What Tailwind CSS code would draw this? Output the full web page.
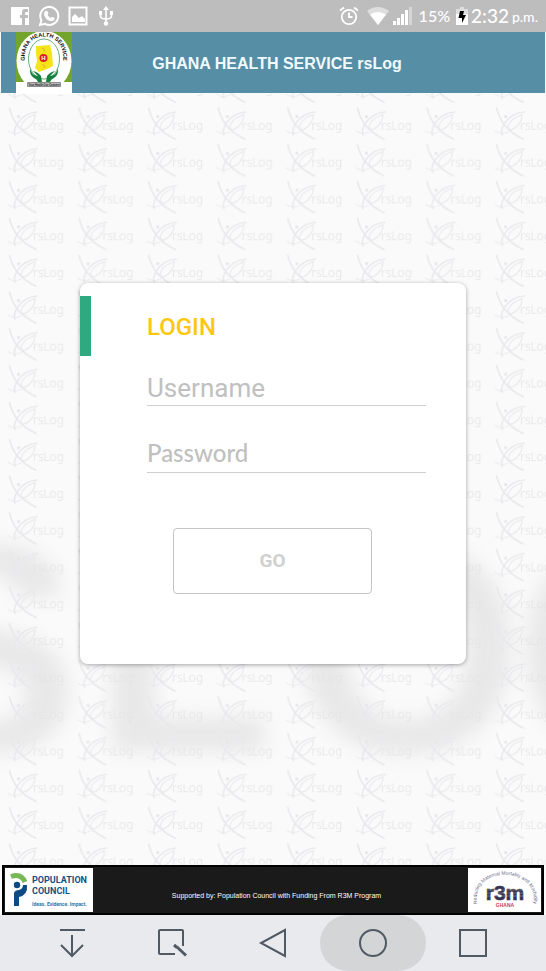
<!DOCTYPE html>
<html lang="en">
<head>
  <meta charset="UTF-8" />
  <meta name="viewport" content="width=device-width, initial-scale=1.0" />
  <title>GHANA HEALTH SERVICE rsLog</title>
  <script src="https://cdn.jsdelivr.net/npm/@tailwindcss/browser@4"></script>
</head>
<body class="min-h-screen flex flex-col bg-[#fafafa] font-['Roboto',sans-serif]">
  <!-- Status bar -->
  <div class="h-8 bg-[#bdbdbd] text-white flex items-center justify-between pl-[10px] pr-2">
    <div class="flex items-center gap-2">
      <svg class="w-5 h-5" viewBox="0 0 20 20"><path fill="currentColor" d="M1 1h18v18h-4v-7h3V9h-3V7q0-1 1-1h2V3h-3q-3 0-3 3v3h-2v3h2v7H1z"/></svg>
      <svg class="w-[22px] h-[22px]" viewBox="0 0 22 22"><path fill="none" stroke="currentColor" stroke-width="2" d="M2 20l1.400-4.800A9 9 0 1 1 7 18.800z"/><path fill="currentColor" d="M7.500 6l1.700-.3 1.300 3-1 1.400q1 1.800 3 2.800l1.500-1.200 2.700 1.400q0 3-3 3C9.500 16 6 12 6 8.700q0-1.700 1.500-2.700z"/></svg>
      <svg class="w-5 h-5" viewBox="0 0 20 20"><path fill="none" stroke="currentColor" stroke-width="2" d="M1.500 1.500h17v17h-17z"/><path fill="currentColor" d="M4 16v-5l3-3 4 4 3-2 3 3v3z"/></svg>
      <svg class="w-5 h-5" viewBox="0 0 20 20"><path fill="none" stroke="currentColor" stroke-width="1.600" d="M10 3v14M4.500 6v4q0 3 5.500 3t5.500-3V6"/><path fill="currentColor" d="M10 0l3 4H7zM3 5h3v4H3zM14 5h3v4h-3z"/><circle cx="10" cy="17.500" r="2.200" fill="currentColor"/></svg>
    </div>
    <div class="flex items-center font-['Lato',sans-serif] font-medium">
      <svg class="w-5 h-5 mr-2" viewBox="0 0 20 20" fill="none" stroke="currentColor" stroke-width="1.800"><circle cx="10" cy="11" r="7.200"/><path d="M10 6.500V11h3.500M1 4.500L5 1.500M19 4.500L15 1.500"/></svg>
      <svg class="w-[22px] h-[18px] mr-1" viewBox="0 0 22 18"><path fill="#dedede" d="M0 4Q11-4 22 4L11 18z"/><path fill="currentColor" d="M3 7.500q8-5 16 0L11 18z"/></svg>
      <svg class="w-[19px] h-[18px] mr-[7px]" viewBox="0 0 19 18"><path fill="currentColor" d="M0 14h3v4H0zM4 11h3v7H4zM8 7h3v11H8zM12 3h3v15h-3z"/><path fill="#d6d6d6" d="M16 0h3v18h-3z"/></svg>
      <span class="text-[16px] leading-8 mr-[6px]">15%</span>
      <svg class="w-3 h-[18px] mr-[3px]" viewBox="0 0 12 18"><path fill="#dedede" d="M4 0h4v2h4v6H0V2h4z"/><path fill="currentColor" d="M0 7h12v11H0z"/><path fill="#000" d="M4 4h4L7 8h3l-4 8V11H2.500z"/></svg>
      <span class="text-[19px] leading-8">2:32</span>
      <span class="text-[14px] leading-8 pt-px ml-[3px]">p.m.</span>
    </div>
  </div>

  <!-- App bar -->
  <header class="relative z-10 h-[61px] mx-px bg-[#558ea5] flex items-center justify-center px-4">
    <svg class="absolute left-[15px] top-0 w-14 h-[62px]" viewBox="0 0 56 62">
      <path fill="#fff" d="M0 0h56v62H0z"/>
      <path fill="#73a52d" d="M0 0h56v50H0z"/>
      <ellipse cx="28" cy="29" rx="27.500" ry="30" fill="#fff"/>
      <path fill="#fff" d="M0 50h56v12H0z"/>
      <ellipse cx="28" cy="27" rx="15.500" ry="20" fill="#fff" stroke="#65ad7d" stroke-width="1"/>
      <path fill="#f4e51b" d="M20 14l14-1 2 8 1 13-6 3-8 3-4-4 2-7-1-8z"/>
      <path fill="none" stroke="#e8a53a" stroke-width="1" d="M26 16q4 1 2 4M26 33q4 0 2 3"/>
      <circle cx="27.500" cy="26" r="4" fill="#e11b22"/>
      <text x="27.500" y="28.200" text-anchor="middle" fill="#fff" font-family="Liberation Sans" font-weight="700" font-size="6">H</text>
      <path fill="#16813f" d="M14 36q1 7 8 8l-5-5q5 1 8 5l1 6h-4q-1-3-4-4-5-3-4-10zM42 36q-1 7-8 8l5-5q-5 1-8 5l-1 6h4q1-3 4-4 5-3 4-10z"/>
      <path id="ghs-arc" fill="none" d="M9 30C5-4 51-4 47 30"/>
      <text fill="#111" font-family="Liberation Sans" font-weight="700" font-size="5.600"><textPath href="#ghs-arc" startOffset="50%" text-anchor="middle">GHANA HEALTH SERVICE</textPath></text>
      <path fill="#bbb" stroke="#555" stroke-width=".6" d="M11.500 50.500h33v4h-33z"/>
      <text x="28" y="53.600" text-anchor="middle" fill="#222" font-family="Liberation Sans" font-weight="700" font-size="2.600">Your Health Our Concern</text>
    </svg>
    <h1 class="ml-2 pt-[3px] font-['Liberation_Sans',sans-serif] font-bold text-[16px] leading-6 text-[#f0fbff]">GHANA HEALTH SERVICE rsLog</h1>
  </header>

  <main class="relative flex-1 overflow-hidden px-20 pt-[190px] pb-[200px]">
    <!-- Watermark -->
    <svg class="absolute inset-0 w-full h-full" aria-hidden="true">
      <defs>
        <filter id="soft" x="-20%" y="-20%" width="140%" height="140%"><feGaussianBlur stdDeviation="10"/></filter>
        <pattern id="tile" x="6" y="12" width="69.600" height="36.800" patternUnits="userSpaceOnUse">
          <g fill="none" stroke="#e9e9ed" stroke-linecap="round">
            <path stroke-width="1.600" d="M3.500 3Q8 24 30 34"/>
            <path stroke-width="1.600" d="M31 7Q18 8 11 19Q7 26 9 30"/>
            <path stroke-width="1.200" d="M29 9Q29 19 20 24Q15 26 15 21Q17 14 28 10"/>
            <path stroke-width="1" d="M2 26Q7 30 15 27"/>
          </g>
          <circle cx="12.500" cy="11.500" r="1.500" fill="#e6e6ea"/>
          <text x="27" y="25" font-family="Noto Sans" font-weight="300" font-size="12" fill="#e3e3e6">rsLog</text>
        </pattern>
      </defs>
      <text x="-119 92 291 515" y="658" font-family="Liberation Sans" font-weight="700" font-size="298" fill="#e8e8e8" filter="url(#soft)">SLOG</text>
      <rect width="100%" height="100%" fill="url(#tile)"/>
    </svg>

    <!-- Login card -->
    <form class="relative bg-white rounded-lg shadow-[0_1px_4px_rgba(0,0,0,0.35)] pl-[67px] pr-10 pt-7 pb-[70px]">
      <span class="absolute left-0 top-[13px] w-[11px] h-[60px] bg-[#2fa97f]"></span>
      <h2 class="text-[24px] leading-8 font-medium text-[#fcc80f]">LOGIN</h2>
      <input type="text" aria-label="Username" placeholder="Username" class="block w-full h-10 mt-[23px] pt-1 border-b border-[#cfcfcf] text-[26px] outline-none placeholder:text-[#c0c0c0]" />
      <input type="password" aria-label="Password" placeholder="Password" class="block w-full h-10 mt-[27px] border-b border-[#cfcfcf] font-['Lato',sans-serif] font-medium text-[24px] outline-none placeholder:text-[#c0c0c0]" />
      <button type="button" class="block w-[199px] h-[66px] mt-[55px] ml-[26px] rounded border border-[#c4c4c4] text-[19px] font-bold text-[#d0d0d0]">GO</button>
    </form>
  </main>

  <!-- Sponsors -->
  <footer class="h-[50px] mx-[2px] bg-[#1a1a1a] border-2 border-black flex items-center justify-between pl-px pr-px">
    <svg class="w-[88px] h-11" viewBox="0 0 88 44">
      <path fill="#fff" d="M0 0h88v44H0z"/>
      <path fill="none" stroke="#76b955" stroke-width="5" d="M6 8.500Q16 5 20 14"/>
      <circle cx="12" cy="17" r="3.200" fill="#0b4a82"/>
      <path fill="#0b4a82" d="M9 38V25q1-3 5-3 4-1 4-5h4q1 10-8 12v9z"/>
      <g font-family="Roboto" fill="#16507f">
        <text x="27" y="15" font-size="9" font-weight="700">POPULATION</text>
        <text x="27" y="26" font-size="9" font-weight="700">COUNCIL</text>
        <text x="27" y="38" font-size="5" font-weight="700" fill="#2a77ac">Ideas. Evidence. Impact.</text>
      </g>
    </svg>
    <p class="pt-3 pr-2 font-['Liberation_Sans',sans-serif] text-[7px] leading-3 text-white">Supported by: Population Council with Funding From R3M Program</p>
    <svg class="w-[73px] h-11" viewBox="0 0 73 44">
      <path fill="#fff" d="M0 0h73v44H0z"/>
      <path id="r3m-arc" fill="none" d="M10 39C-2-4 75-4 65 39"/>
      <text fill="#6d6b8c" font-family="Liberation Sans" font-size="5"><textPath href="#r3m-arc" startOffset="50%" text-anchor="middle">Reducing Maternal Mortality and Morbidity</textPath></text>
      <text x="37" y="32" text-anchor="middle" fill="#33334f" stroke="#33334f" stroke-width=".6" font-family="Liberation Sans" font-weight="700" font-size="21">r3m</text>
      <path stroke="#fff" stroke-width=".3" d="M15 22h44M15 25h44M15 28h44"/>
      <text x="37" y="39" text-anchor="middle" fill="#c8434c" font-family="Liberation Sans" font-weight="700" font-size="5">GHANA</text>
    </svg>
  </footer>

  <!-- Navigation bar -->
  <nav class="h-14 bg-[#e8eaed] text-[#505a64] flex justify-center">
    <button type="button" aria-label="Notifications" class="w-[100px] flex items-center justify-center"><svg class="w-8 h-8" viewBox="0 0 32 32" fill="none" stroke="currentColor" stroke-width="2"><path d="M3 3h25M15 8v21M4 18l11 11 11-11"/></svg></button>
    <button type="button" aria-label="Capture" class="w-[100px] flex items-center justify-center"><svg class="w-8 h-8" viewBox="0 0 32 32" fill="none" stroke="currentColor" stroke-width="2"><path d="M18 27H3q-1 0-1-1V4q0-1 1-1h22q1 0 1 1v15"/><path stroke-width="3" d="M17 18l3 2.500M20 20l9 8.500"/></svg></button>
    <button type="button" aria-label="Back" class="w-[100px] flex items-center justify-center"><svg class="w-8 h-8" viewBox="0 0 32 32" fill="none" stroke="currentColor" stroke-width="2"><path d="M28 3v26L4 16z"/></svg></button>
    <button type="button" aria-label="Home" class="w-[106px] -mx-[3px] flex items-center justify-center rounded-full bg-[#d3d5d7]"><svg class="w-8 h-8" viewBox="0 0 32 32" fill="none" stroke="currentColor" stroke-width="2"><circle cx="16" cy="16" r="13"/></svg></button>
    <button type="button" aria-label="Recent apps" class="w-[100px] flex items-center justify-center"><svg class="w-8 h-8" viewBox="0 0 32 32" fill="none" stroke="currentColor" stroke-width="2"><path d="M3 3h26v26H3z"/></svg></button>
  </nav>
</body>
</html>
